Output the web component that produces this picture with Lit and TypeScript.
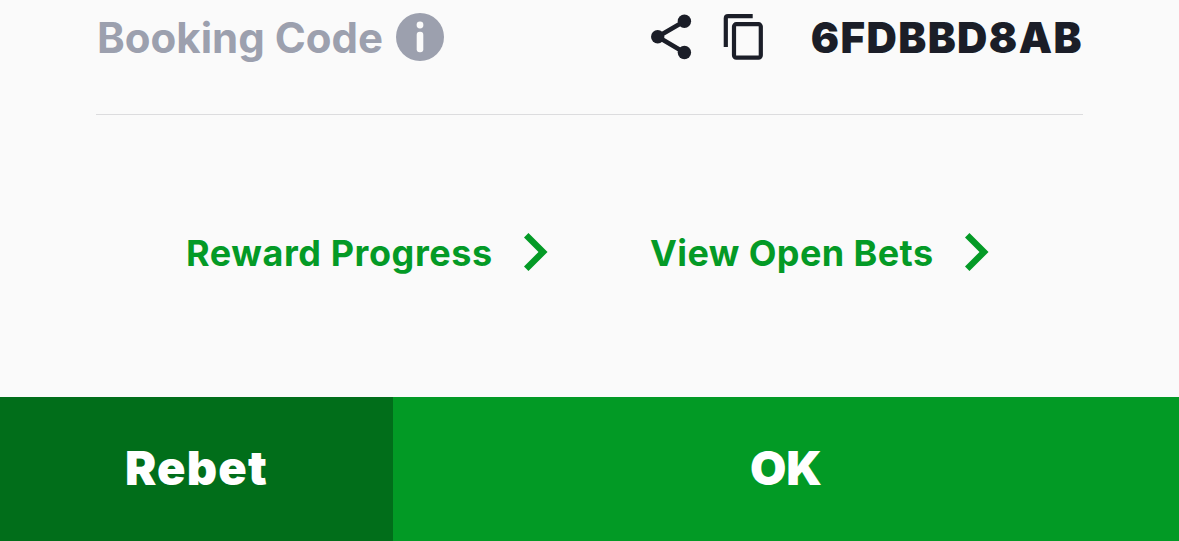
import { LitElement, html, css } from 'lit';
import { customElement, property } from 'lit/decorators.js';

// text link with a chevron on its right
@customElement('nav-link')
export class NavLink extends LitElement {
  @property({ type: String }) label = '';

  static styles = css`
    :host {
      display: flex;
      align-items: center;
      justify-content: space-between;
      color: #049a26;
      font-size: 36px;
      font-weight: 700;
      line-height: 44px;
      white-space: nowrap;
    }
    span {
      padding-top: 2px;
    }
    svg {
      display: block;
      flex: none;
    }
  `;

  render() {
    return html`
      <span>${this.label}</span>
      <svg width="24" height="40" viewBox="0 0 24 40" fill="none" stroke="currentColor" stroke-width="6.4">
        <path d="M2.2 3.2 19 20 2.2 36.8" />
      </svg>
    `;
  }
}

@customElement('app-root')
export class AppRoot extends LitElement {
  @property({ type: String }) code = '6FDBBD8AB';

  static styles = css`
    :host {
      display: flex;
      flex-direction: column;
      height: 541px;
      overflow: hidden;
      background: #fafafa;
      font-family: Inter, 'Liberation Sans', sans-serif;
    }
    svg {
      display: block;
      flex: none;
    }
    .booking {
      display: flex;
      align-items: center;
      box-sizing: border-box;
      height: 115px;
      margin: 0 96px;
      padding-bottom: 40px;
      border-bottom: 1px solid #dcdcde;
      white-space: nowrap;
    }
    .label {
      box-sizing: border-box;
      width: 300px;
      padding-left: 1px;
      color: #9ca0ae;
      font-size: 42px;
      font-weight: 700;
    }
    .actions {
      display: flex;
      gap: 30px;
      margin-left: 207px;
      color: #1b1e28;
    }
    .code {
      margin-left: auto;
      color: #1b1e28;
      font-size: 42px;
      font-weight: 900;
      letter-spacing: 1.4px;
    }
    .links {
      display: flex;
      flex: 1;
      gap: 102px;
      padding: 115px 190px 0 186px;
    }
    .reward {
      width: 362px;
      height: 44px;
      letter-spacing: 0.58px;
    }
    .bets {
      width: 339px;
      height: 44px;
      letter-spacing: 0.4px;
    }
    .footer {
      display: grid;
      grid-template-columns: 393px 1fr;
      height: 144px;
    }
    button {
      border: 0;
      padding: 0 0 3px;
      background: #029a25;
      color: #fff;
      font: 900 47px Inter, 'Liberation Sans', sans-serif;
    }
    .rebet {
      background: #016e1a;
      letter-spacing: 1.2px;
    }
  `;

  render() {
    return html`
      <div class="booking">
        <span class="label">Booking Code</span>
        <svg width="48" height="48" viewBox="0 0 48 48">
          <circle cx="24" cy="24" r="24" fill="#9ca0ae" />
          <circle cx="24" cy="12" r="3.4" fill="#fafafa" />
          <rect x="20.7" y="18.7" width="6.6" height="20.6" rx="3" fill="#fafafa" />
        </svg>
        <div class="actions">
          <svg width="41" height="46" viewBox="0 0 41 46" fill="currentColor">
            <path d="M33.4 7.2 6.7 22.7 33.4 38.5" fill="none" stroke="currentColor" stroke-width="4.6" />
            <circle cx="33.4" cy="7.2" r="6.7" />
            <circle cx="6.7" cy="22.7" r="6.7" />
            <circle cx="33.4" cy="38.5" r="6.7" />
          </svg>
          <svg width="41" height="46" viewBox="0 0 41 46" fill="none" stroke="currentColor" stroke-width="4.2">
            <path d="M3.8 33V4.3Q3.8 2.1 6.1 2.1H30.7" />
            <rect x="12" y="10.2" width="26.8" height="33.4" rx="2.3" />
          </svg>
        </div>
        <span class="code">${this.code}</span>
      </div>
      <div class="links">
        <nav-link class="reward" label="Reward Progress"></nav-link>
        <nav-link class="bets" label="View Open Bets"></nav-link>
      </div>
      <div class="footer">
        <button class="rebet">Rebet</button>
        <button>OK</button>
      </div>
    `;
  }
}
